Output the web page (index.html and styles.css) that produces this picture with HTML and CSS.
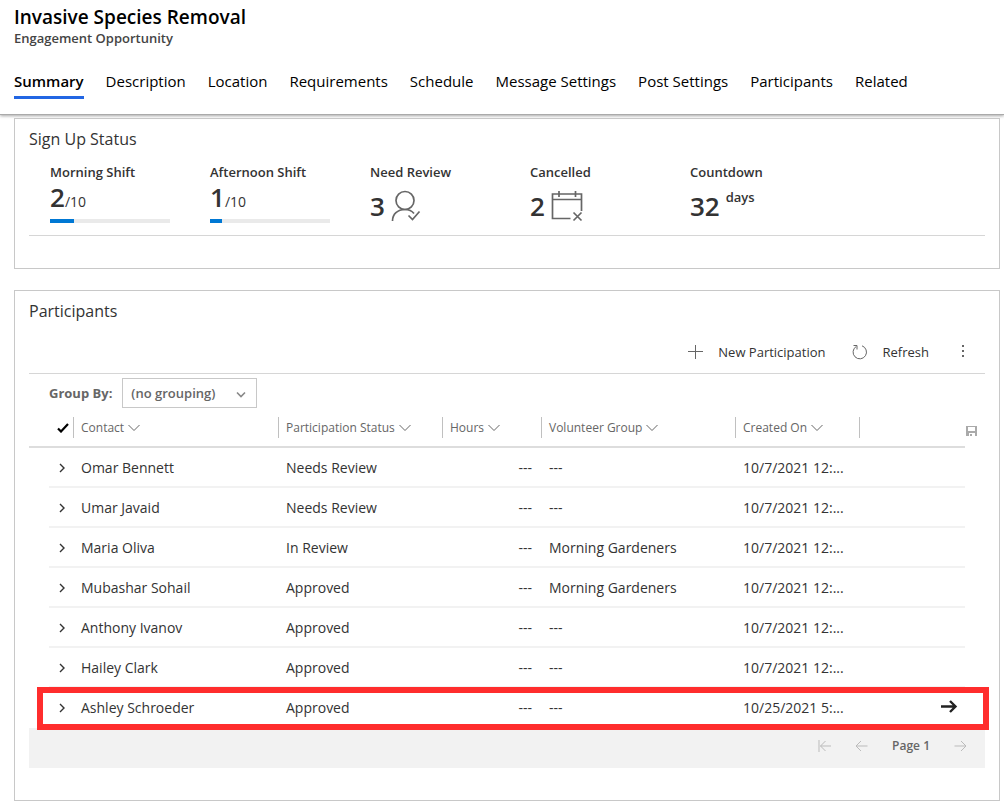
FILE: index.html
```html
<!DOCTYPE html>
<html lang="en">
<head>
<meta charset="utf-8">
<title>Invasive Species Removal</title>
<link rel="stylesheet" href="styles.css">
</head>
<body>
<header class="page-header">
  <h1 class="page-title">Invasive Species Removal</h1>
  <p class="page-subtitle">Engagement Opportunity</p>
  <nav class="tabs">
    <a class="tab tab-active" href="#summary">Summary</a>
    <a class="tab" href="#description">Description</a>
    <a class="tab" href="#location">Location</a>
    <a class="tab" href="#requirements">Requirements</a>
    <a class="tab" href="#schedule">Schedule</a>
    <a class="tab" href="#messages">Message Settings</a>
    <a class="tab" href="#post">Post Settings</a>
    <a class="tab" href="#participants">Participants</a>
    <a class="tab" href="#related">Related</a>
  </nav>
</header>
<main class="content">
  <section class="card status-card">
    <h2 class="card-title">Sign Up Status</h2>
    <div class="stats">
      <div class="stat">
        <h3 class="stat-label">Morning Shift</h3>
        <p class="stat-value"><b class="num">2</b><span class="of">/10</span></p>
        <div class="bar"><div class="bar-fill" style="width:20%"></div></div>
      </div>
      <div class="stat">
        <h3 class="stat-label">Afternoon Shift</h3>
        <p class="stat-value"><b class="num">1</b><span class="of">/10</span></p>
        <div class="bar"><div class="bar-fill" style="width:10%"></div></div>
      </div>
      <div class="stat">
        <h3 class="stat-label">Need Review</h3>
        <p class="stat-value stat-tall"><b class="num">3</b>
          <svg class="stat-icon" width="32" height="32" viewBox="0 0 32 32"><circle cx="14" cy="10.500" r="9"/><path d="M1.500 31c0-7 5-11.500 12.500-11.500 4 0 7 1.500 9 4M17.500 25.500l4 4 7-8"/></svg>
        </p>
      </div>
      <div class="stat">
        <h3 class="stat-label">Cancelled</h3>
        <p class="stat-value stat-tall"><b class="num">2</b>
          <svg class="stat-icon" width="32" height="32" viewBox="0 0 32 32"><path d="M19.500 28.500H1.500V4h29v17M1.500 9.500h29M8 1v6M24.500 1v6M22.500 22.500l8 8M30.500 22.500l-8 8"/></svg>
        </p>
      </div>
      <div class="stat">
        <h3 class="stat-label">Countdown</h3>
        <p class="stat-value stat-tall"><b class="num">32</b><span class="days">days</span></p>
      </div>
    </div>
  </section>

  <section class="card people-card">
    <h2 class="card-title">Participants</h2>
    <div class="toolbar">
      <button class="command" type="button"><svg width="16" height="16" viewBox="0 0 16 16"><path d="M8.500 1v14M1 7.500h15"/></svg>New Participation</button>
      <button class="command" type="button"><svg width="16" height="16" viewBox="0 0 16 16"><path d="M10 1.800A6.700 6.700 0 1 1 4.300 2.400M1.500 1.500h3.500v4"/></svg>Refresh</button>
      <button class="command" type="button" aria-label="More commands"><svg class="dots" width="4" height="16" viewBox="0 0 4 16"><path d="M1 1h2v2H1zM1 6h2v2H1zM1 11h2v2H1z"/></svg></button>
    </div>
    <div class="grouping">
      <label class="group-label" for="group">Group By:</label>
      <div class="select-wrap">
        <select class="group-select" id="group"><option>(no grouping)</option></select>
        <svg class="select-arrow" width="10" height="8" viewBox="0 0 10 8"><path d="M1 1.500l4 4 4-4"/></svg>
      </div>
    </div>
    <div class="grid">
      <table class="table">
        <colgroup><col class="c-edge"><col class="c-check"><col class="c-contact"><col class="c-status"><col class="c-hours"><col class="c-group"><col class="c-created"><col></colgroup>
        <thead>
          <tr>
            <th></th>
            <th><button class="sort" type="button" aria-label="Select all"><svg class="check" width="12" height="10" viewBox="0 0 12 10"><path d="M1 5.500l3 3L11 1"/></svg></button></th>
            <th><button class="sort split" type="button">Contact<svg width="12" height="8" viewBox="0 0 12 8"><path d="M.5 1L6 6.500 11.500 1"/></svg></button></th>
            <th><button class="sort split" type="button">Participation Status<svg width="12" height="8" viewBox="0 0 12 8"><path d="M.5 1L6 6.500 11.500 1"/></svg></button></th>
            <th><button class="sort split" type="button">Hours<svg width="12" height="8" viewBox="0 0 12 8"><path d="M.5 1L6 6.500 11.500 1"/></svg></button></th>
            <th><button class="sort split" type="button">Volunteer Group<svg width="12" height="8" viewBox="0 0 12 8"><path d="M.5 1L6 6.500 11.500 1"/></svg></button></th>
            <th><button class="sort split" type="button">Created On<svg width="12" height="8" viewBox="0 0 12 8"><path d="M.5 1L6 6.500 11.500 1"/></svg></button></th>
            <th><div class="sort split"></div></th>
          </tr>
        </thead>
        <tbody>
          <tr><td></td><td><button class="expand" type="button" aria-label="Expand"><svg width="6" height="10" viewBox="0 0 6 10"><path d="M1 1l4 4-4 4"/></svg></button></td><td>Omar Bennett</td><td>Needs Review</td><td>---</td><td>---</td><td>10/7/2021 12:...</td><td></td></tr>
          <tr><td></td><td><button class="expand" type="button" aria-label="Expand"><svg width="6" height="10" viewBox="0 0 6 10"><path d="M1 1l4 4-4 4"/></svg></button></td><td>Umar Javaid</td><td>Needs Review</td><td>---</td><td>---</td><td>10/7/2021 12:...</td><td></td></tr>
          <tr><td></td><td><button class="expand" type="button" aria-label="Expand"><svg width="6" height="10" viewBox="0 0 6 10"><path d="M1 1l4 4-4 4"/></svg></button></td><td>Maria Oliva</td><td>In Review</td><td>---</td><td>Morning Gardeners</td><td>10/7/2021 12:...</td><td></td></tr>
          <tr><td></td><td><button class="expand" type="button" aria-label="Expand"><svg width="6" height="10" viewBox="0 0 6 10"><path d="M1 1l4 4-4 4"/></svg></button></td><td>Mubashar Sohail</td><td>Approved</td><td>---</td><td>Morning Gardeners</td><td>10/7/2021 12:...</td><td></td></tr>
          <tr><td></td><td><button class="expand" type="button" aria-label="Expand"><svg width="6" height="10" viewBox="0 0 6 10"><path d="M1 1l4 4-4 4"/></svg></button></td><td>Anthony Ivanov</td><td>Approved</td><td>---</td><td>---</td><td>10/7/2021 12:...</td><td></td></tr>
          <tr><td></td><td><button class="expand" type="button" aria-label="Expand"><svg width="6" height="10" viewBox="0 0 6 10"><path d="M1 1l4 4-4 4"/></svg></button></td><td>Hailey Clark</td><td>Approved</td><td>---</td><td>---</td><td>10/7/2021 12:...</td><td></td></tr>
          <tr class="marked"><td></td><td><button class="expand" type="button" aria-label="Expand"><svg width="6" height="10" viewBox="0 0 6 10"><path d="M1 1l4 4-4 4"/></svg></button></td><td>Ashley Schroeder</td><td>Approved</td><td>---</td><td>---</td><td>10/25/2021 5:...</td><td><button class="open" type="button" aria-label="Open record"><svg width="17" height="14" viewBox="0 0 17 14"><path d="M0 6.500h14.500M9 1l5.500 5.500L9 12"/></svg></button></td></tr>
        </tbody>
      </table>
      <button class="save" type="button" aria-label="Save"><svg width="11" height="10" viewBox="0 0 11 10"><path fill-rule="evenodd" d="M0 0h11v10H9V7H3v3H0zM2 1v4h7V1zM4 8h2v2H4z"/></svg></button>
    </div>
    <footer class="pager">
      <button class="page-btn" type="button" aria-label="First page"><svg width="13" height="12" viewBox="0 0 13 12"><path d="M1 0v12M13 6H2.500M7.500 1l-5 5 5 5"/></svg></button>
      <button class="page-btn" type="button" aria-label="Previous page"><svg width="13" height="12" viewBox="0 0 13 12"><path d="M12.500 6H1M6 1L1 6l5 5"/></svg></button>
      <span class="page-number">Page 1</span>
      <button class="page-btn" type="button" aria-label="Next page"><svg width="13" height="12" viewBox="0 0 13 12"><path d="M.5 6H12M7 1l5 5-5 5"/></svg></button>
    </footer>
  </section>
</main>
</body>
</html>
```
FILE: styles.css
```css
* { box-sizing: border-box; }
body {
  margin: 0;
  background: #fff;
  color: #333;
  font-family: "Open Sans", "Noto Sans", sans-serif;
  font-size: 14px;
  line-height: 20px;
}
h1, h2, h3, p { margin: 0; }
button, select { font: inherit; color: inherit; }
button { background: none; border: 0; padding: 0; }
svg { fill: none; stroke: currentColor; flex: none; }

.page-header {
  padding: 5px 14px 15px;
  border-bottom: 1px solid #aaa;
  box-shadow: 0 1px 3px rgba(0, 0, 0, .35);
}
.page-title { font-size: 19px; font-weight: 600; line-height: 24px; color: #000; }
.page-subtitle { font-size: 13px; font-weight: 600; line-height: 18px; color: #444; }
.tabs { display: flex; gap: 22px; margin-top: 23px; }
.tab {
  font-size: 15px;
  line-height: 22px;
  padding-bottom: 4px;
  border-bottom: 3px solid transparent;
  color: #000;
  text-decoration: none;
  white-space: nowrap;
}
.tab-active { font-weight: 600; border-color: #2266e3; }

.content { padding: 3px 4px 3px 14px; display: flex; flex-direction: column; gap: 21px; }
.card { border: 1px solid #c8c8c8; padding: 10px 14px 32px; }
.card-title { font-size: 16px; font-weight: 400; line-height: 20px; }

.stats {
  display: grid;
  grid-template-columns: repeat(5, 160px);
  padding: 13px 21px 5px;
  border-bottom: 1px solid #d6d6d6;
}
.stat-label { font-size: 13px; font-weight: 600; line-height: 20px; }
.stat-value { display: flex; align-items: baseline; height: 37px; line-height: 30px; }
.stat-tall { height: 48px; align-items: center; gap: 6px; }
.num { font-size: 26px; font-weight: 600; }
.of { font-size: 14px; }
.days { align-self: flex-start; font-weight: 600; font-size: 13px; }
.stat-icon { color: #666; stroke-width: 1.7; }
.bar { width: 120px; height: 4px; background: #eaeaea; }
.bar-fill { height: 100%; background: #0078d4; }

.toolbar {
  display: flex;
  justify-content: flex-end;
  align-items: center;
  gap: 26px;
  height: 53px;
  padding: 10px 20px 0 0;
  border-bottom: 1px solid #d6d6d6;
  font-size: 13px;
}
.command { display: flex; align-items: center; gap: 15px; }
.command svg { color: #666; }
.dots { fill: currentColor; stroke: none; margin-left: 6px; }

.grouping { display: flex; align-items: center; gap: 10px; padding: 4px 20px 0; color: #666; font-weight: 600; font-size: 13px; }
.group-label { font-weight: 700; }
.select-wrap { position: relative; }
.group-select {
  appearance: none;
  width: 135px;
  height: 30px;
  padding: 0 8px;
  border: 1px solid #c8c8c8;
  border-radius: 0;
  background: #fff;
}
.select-arrow { position: absolute; right: 11px; top: 13px; stroke-width: 1.6; color: #888; pointer-events: none; }

.grid { display: flex; align-items: flex-start; }
.table { flex: 1; min-width: 0; width: 100%; table-layout: fixed; border-spacing: 0; }
.c-edge { width: 20px; }
.c-check { width: 24px; }
.c-contact { width: 205px; }
.c-status { width: 164px; }
.c-hours { width: 99px; }
.c-group { width: 194px; }
.c-created { width: 124px; }
.table th { padding: 1px 0 0; height: 40px; border-bottom: 2px solid #ddd; text-align: left; font-weight: 400; }
.sort { display: flex; align-items: center; gap: 4px; height: 21px; font-size: 12px; color: #666; white-space: nowrap; }
.split { padding-left: 7px; border-left: 1px solid #c0c0c0; }
.check { color: #000; stroke-width: 2.2; margin-left: 8px; }
.table td { padding: 2px 0 0 8px; height: 40px; border-bottom: 2px solid #f2f2f2; white-space: nowrap; }
.table td:first-child { border: 0; padding: 0; }
.table td:nth-child(5) { text-align: right; padding-right: 9px; }
.table td:last-child { padding-top: 0; }
.expand { display: block; margin-left: 2px; }
.expand svg { display: block; stroke-width: 1.4; }
.open { display: block; margin-left: 74px; color: #222; }
.open svg { display: block; stroke-width: 2.4; }
.marked { position: relative; }
.marked td { border-bottom-color: #fff; }
.marked td:first-child::before {
  content: "";
  position: absolute;
  inset: -1px -24px -2px 8px;
  border: 6px solid #ff2d2d;
  pointer-events: none;
}
.save { width: 20px; padding-top: 18px; }
.save svg { display: block; margin-left: 1px; fill: #aaa; stroke: none; }

.pager { display: flex; justify-content: flex-end; align-items: center; gap: 24px; height: 40px; padding: 0 18px 4px; background: #f2f2f2; }
.page-btn { color: #bbb; display: flex; }
.page-number { font-size: 12px; font-weight: 600; color: #666; }
```
